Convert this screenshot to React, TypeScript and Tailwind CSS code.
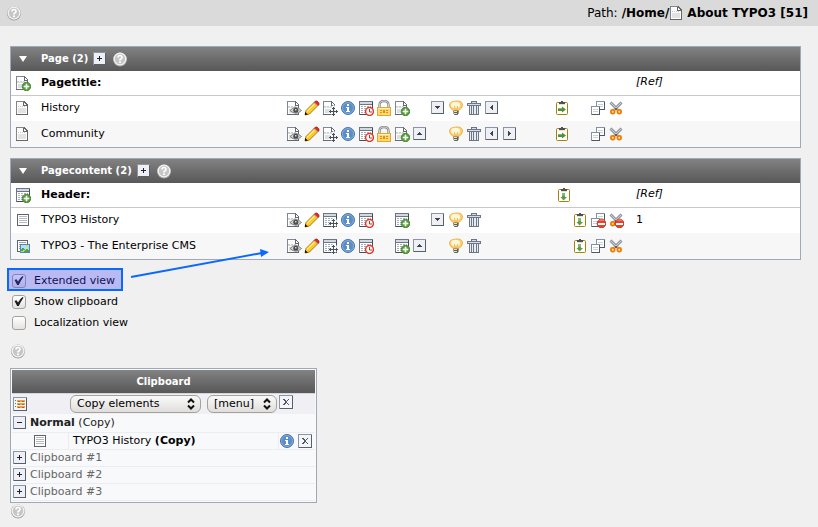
import { useState, type ReactNode } from "react";

type IconName =
  | "eye" | "pencil" | "movePage" | "moveContent" | "info" | "history" | "lock"
  | "newPage" | "newContent" | "up" | "down" | "left" | "right" | "bulb" | "trash"
  | "pasteInto" | "pasteAfter" | "copy" | "cut" | "copyOff" | "cutOff"
  | "page" | "content" | "image" | "plus" | "minus" | "close" | "list";

const PageSheet = () => (
  <g shapeRendering="crispEdges">
    <path d="M1 1h8v1h1v1h1v1h1v1h1v10H1z" fill="#fff" />
    <path d="M2 7h9v1H2zM3 9h8v4H3z" fill="#dedfe1" />
    <path d="M2 6h2v1H2zM5 6h2v1H5zM8 6h2v1H8z" fill="#c9cbd0" />
    <path d="M1 1h8v1H2v12H1z" fill="#7e8796" />
    <path d="M9 1h1v1h1v1h1v1h1v11H1v-1h11V6H9z M10 3v2h2V4h-1V3z" fill="#626a77" fillRule="evenodd" />
  </g>
);

const PlainPage = () => (
  <g shapeRendering="crispEdges">
    <path d="M1 1h8l4 4v10H1z" fill="#fbfbfb" />
    <path d="M3 8h8v5H3z" fill="#e2e2e2" />
    <path d="M3 6h1v1H3zM5 6h1v1H5zM7 6h1v1H7zM9 6h1v1H9z" fill="#c6c6c6" />
    <path d="M1 1h8v1H2v12H1z" fill="#858585" />
    <path d="M9 1h1v1h1v1h1v1h1v11H1v-1h11V6H8V2h1zM9 3v2h2V4h-1V3z" fill="#666" fillRule="evenodd" />
  </g>
);

const ContentSheet = () => (
  <g shapeRendering="crispEdges">
    <path d="M1 1h14v14H1z" fill="#fff" />
    <path d="M2 2h12v2H2z" fill="#d3d9e3" />
    <path d="M1 1h14v1H1zM1 2h1v13H1zM2 4h12v1H2z" fill="#6b7787" />
    <path d="M14 2h1v13H2v-1h12z" fill="#444c57" />
    <path d="M3 6h2v1H3zM6 6h2v1H6zM9 6h2v1H9zM12 6h1v1h-1zM3 8h2v1H3zM6 8h2v1H6zM9 8h2v1H9zM12 8h1v1h-1zM3 10h2v1H3zM6 10h2v1H6zM9 10h2v1H9zM3 12h2v1H3zM6 12h2v1H6z" fill="#a5adb8" />
  </g>
);

const GreenPlus = () => (
  <g>
    <circle cx="11.500" cy="11.500" r="4.200" fill="#5c9f40" stroke="#4a8a33" />
    <path d="M11 9h1v2h2v1h-2v2h-1v-2H9v-1h2z" fill="#fff" stroke="#fff" strokeWidth=".6" />
  </g>
);

const MoveCross = () => (
  <g>
    <path d="M11 5h1l3 3v1l1 2v1l-3 3-1 1h-1l-1-1-3-3v-1l3-3z" fill="#fff" opacity=".8" />
    <path d="M11 7h1v9h-1zM7 11h9v1H7zM10 8h3v1h-3zM10 14h3v1h-3zM8 10h1v3H8zM14 10h1v3h-1z" fill="#4a515d" shapeRendering="crispEdges" />
  </g>
);

const BlockSign = () => (
  <g>
    <circle cx="11.500" cy="11.500" r="4.300" fill="#e3442c" stroke="#c8301a" />
    <path d="M8 8.800q3.500-3 7 0z" fill="#f58c70" />
    <path d="M8 11h7v2H8z" fill="#fff" />
  </g>
);

const Clip = () => (
  <g>
    <rect x="2.500" y="2.500" width="11" height="12" rx="1" fill="#fff" stroke="#a87f08" />
    <path d="M7 1h2v1h2v2H5V2h2z" fill="#4c5058" />
    <path d="M5 4h6v1H5z" fill="#efe1bd" />
  </g>
);

const Copies = () => (
  <g shapeRendering="crispEdges">
    <path d="M6 1h9v9H6z" fill="#fff" />
    <path d="M6 1h9v1H7v8H6z" fill="#8490a3" />
    <path d="M14 2h1v8H7V9h7z" fill="#4f5968" />
    <path d="M8 4h5v1H8zM8 6h5v1H8z" fill="#ccd1d8" />
    <path d="M1 6h9v9H1z" fill="#fff" />
    <path d="M1 6h9v1H2v8H1z" fill="#8490a3" />
    <path d="M9 7h1v8H2v-1h7z" fill="#4f5968" />
    <path d="M3 9h5v1H3zM3 11h5v1H3z" fill="#ccd1d8" />
  </g>
);

const Scissors = () => (
  <g>
    <path d="M2.500 2.500L9.500 9.500M13.500 2.500L6.500 9.500" stroke="#6c7683" strokeWidth="2.800" />
    <path d="M2.500 2.500L9.500 9.500M13.500 2.500L6.500 9.500" stroke="#c6ccd5" strokeWidth="1.300" />
    <path d="M7 8h2v2H7z" fill="#8a5a30" />
    <rect x="2.900" y="9.900" width="3.700" height="3.700" rx="1.500" fill="#ffe3b8" stroke="#ef7a00" strokeWidth="1.800" />
    <rect x="9.400" y="9.900" width="3.700" height="3.700" rx="1.500" fill="#ffe3b8" stroke="#ef7a00" strokeWidth="1.800" />
  </g>
);

const Box = ({ children }: { children: ReactNode }) => (
  <g shapeRendering="crispEdges">
    <path d="M1 1h13v13H1z" fill="#eef0f5" />
    <path d="M1 1h13v1H2v12H1z" fill="#8b95a5" />
    <path d="M13 2h1v12H2v-1h11z" fill="#565f6d" />
    {children}
  </g>
);

const WideBox = ({ children }: { children: ReactNode }) => (
  <g shapeRendering="crispEdges">
    <path d="M1 1h14v14H1z" fill="#f4f5f9" />
    <path d="M1 1h14v1H2v13H1z" fill="#8b95a5" />
    <path d="M14 2h1v13H2v-1h12z" fill="#565f6d" />
    {children}
  </g>
);

const drawings: Record<IconName, ReactNode> = {
  page: <PlainPage />,
  eye: (
    <g>
      <PageSheet />
      <path d="M4 10.500q5.500-6 11.500 0q-5.500 5.500-11.500 0z" fill="#d4d4d4" stroke="#808080" strokeWidth="1" />
      <circle cx="9.800" cy="10.200" r="2.500" fill="#4c4c4c" />
      <path d="M9 9h1.500v1.500H9z" fill="#d8d8d8" />
    </g>
  ),
  pencil: (
    <g>
      <path d="M1 15l1-4.500L10.500 2l3.500 3.500L5.500 14z" fill="#ffcb1e" stroke="#9a5b06" strokeWidth=".8" />
      <path d="M3 11.500L10.500 4" stroke="#fff08a" strokeWidth="1.300" />
      <path d="M10 2.500l1.500-1.500h1.500l2 2v1.500L13.500 6z" fill="#e0301c" stroke="#9d1d0e" strokeWidth=".7" />
      <path d="M10 2.500L13.500 6" stroke="#ddd" strokeWidth="1" />
      <path d="M1 15v-3l3 2.500z" fill="#111" />
    </g>
  ),
  movePage: <g><PageSheet /><MoveCross /></g>,
  moveContent: <g><ContentSheet /><MoveCross /></g>,
  info: (
    <g>
      <circle cx="8" cy="8" r="6.500" fill="#5b8dc8" stroke="#4676ad" />
      <circle cx="8" cy="8" r="5.500" fill="none" stroke="#8db3df" strokeWidth=".8" />
      <path d="M7 4h2v2H7zM6 7h3v4h1v1H6v-1h1V8H6z" fill="#fff" />
    </g>
  ),
  history: (
    <g>
      <ContentSheet />
      <circle cx="11.500" cy="11.500" r="3.900" fill="#fff" stroke="#de3a28" strokeWidth="1.500" />
      <path d="M11.500 9v3H14" fill="none" stroke="#c03226" />
    </g>
  ),
  lock: (
    <g>
      <path d="M3.500 8V5q0-4 4.500-4t4.500 4v3" fill="none" stroke="#85888a" strokeWidth="2.400" />
      <path d="M3.500 8V5q0-4 4.500-4t4.500 4v3" fill="none" stroke="#d1d3d3" strokeWidth="1" />
      <rect x="1.500" y="7.500" width="13" height="8" fill="#ffd870" stroke="#e5a531" />
      <path d="M2 8h12v1H2z" fill="#fff0b5" />
      <path d="M4 10h2v1H4zM10 10h2v1h-2zM4 12h2v1H4zM10 12h2v1h-2zM7 10h2v3H7z" fill="#d79220" />
    </g>
  ),
  newPage: <g><PageSheet /><GreenPlus /></g>,
  newContent: <g><ContentSheet /><GreenPlus /></g>,
  up: <Box><path d="M7 6h1v1h1v1h1v1H5V8h1V7h1z" fill="#41454b" /></Box>,
  down: <Box><path d="M5 6h5v1H9v1H8v1H7V8H6V7H5z" fill="#41454b" /></Box>,
  left: <Box><path d="M8 5h1v5H8V9H7V8H6V7h1V6h1z" fill="#41454b" /></Box>,
  right: <Box><path d="M6 5h1v1h1v1h1v1H8v1H7v1H6z" fill="#41454b" /></Box>,
  plus: <Box><path d="M7 5h1v2h2v1H8v2H7V8H5V7h2z" fill="#20242a" /></Box>,
  minus: <Box><path d="M5 7h5v1H5z" fill="#20242a" /></Box>,
  close: (
    <WideBox>
      <path d="M5 5h2v1h1v1h1V6h1V5h1v1h-1v1H9v2h1v1h1v1h-1v-1H9V9H8v1H7v1H5v-1h1V9h1V7H6V6H5z" fill="#505763" />
    </WideBox>
  ),
  list: (
    <WideBox>
      <path d="M3 4h1v1H3zM3 7h1v1H3zM3 10h1v1H3z" fill="#4c8a32" />
      <path d="M5 4h8v2H5zM5 7h8v2H5zM5 10h8v2H5z" fill="#f0a24a" />
      <path d="M6 5h2v1H6zM10 5h2v1h-2zM6 8h2v1H6zM10 8h2v1h-2zM6 11h2v1H6zM10 11h2v1h-2z" fill="#b0651c" />
    </WideBox>
  ),
  bulb: (
    <g>
      <path d="M5.500 10.500Q1.500 8.500 1.500 5T8 1t6.500 4q0 3.500-4 5.500V12h-5z" fill="#fcd070" stroke="#e8a93a" strokeWidth=".8" />
      <ellipse cx="7.500" cy="5" rx="4.500" ry="3.200" fill="#fff6d4" />
      <path d="M6.500 6l.7 4M9.500 6L8.800 10" stroke="#e0a94e" strokeWidth=".8" />
      <path d="M5.500 10.500h5v3l-1 1.500h-3l-1-1.500z" fill="#5a5f68" />
      <path d="M6 11h3v1H6zM6 13h3v1H6z" fill="#f3dfa6" />
    </g>
  ),
  trash: (
    <g shapeRendering="crispEdges">
      <path d="M5 1h6v2h4v3H1V3h4z" fill="#6b7788" />
      <path d="M6 2h4v1H6zM2 4h12v1H2z" fill="#d8dde5" />
      <path d="M3 6h10v9H3z" fill="#6b7788" />
      <path d="M4 6h1v8H4zM6 6h1v8H6zM8 6h2v8H8zM11 6h1v8h-1z" fill="#e9ecf1" />
    </g>
  ),
  pasteInto: <g><Clip /><path d="M4 8h4V6.500l4 3-4 3V11H4z" fill="#4f8f3e" /><path d="M4 8h4v1H4z" fill="#83b673" /></g>,
  pasteAfter: <g><Clip /><path d="M6 6h3v4h2l-3.500 3.500L4.500 10H6z" fill="#5c9a4a" /><path d="M6 6h3v3H6z" fill="#85b577" /></g>,
  copy: <Copies />,
  cut: <Scissors />,
  copyOff: <g><Copies /><BlockSign /></g>,
  cutOff: <g><Scissors /><BlockSign /></g>,
  content: (
    <g shapeRendering="crispEdges">
      <path d="M2 2h12v12H2z" fill="#5d646f" />
      <path d="M3 3h10v10H3z" fill="#fff" />
      <path d="M4 4h8v1H4zM4 6h8v1H4zM4 8h8v1H4zM4 10h8v1H4z" fill="#b4bac0" />
    </g>
  ),
  image: (
    <g shapeRendering="crispEdges">
      <path d="M2 2h11v12H2z" fill="#5d646f" />
      <path d="M3 3h9v10H3z" fill="#fff" />
      <path d="M4 4h7v1H4zM4 6h1v1H4zM4 8h1v1H4zM4 10h1v1H4z" fill="#98a0ab" />
      <path d="M5 6h10v9H5z" fill="#4f86b9" />
      <path d="M6 7h8v7H6z" fill="#b5e0fb" />
      <path d="M6 11h1v-1h2v1h1v1h1v-1h2v1h1v2H6z" fill="#57a23c" />
      <path d="M6 13h3v1H6zM8 12h2v1H8z" fill="#bfe078" />
      <path d="M11 7h2v2h-2z" fill="#ffd432" />
    </g>
  ),
};

const Icon = ({ name }: { name: IconName }) => (
  <svg viewBox="0 0 16 16" className="block size-4 shrink-0" aria-hidden="true">
    {drawings[name]}
  </svg>
);

const IconButton = ({ name }: { name: IconName }) => (
  <button type="button" aria-label={name} className="block size-4 shrink-0 cursor-pointer">
    <Icon name={name} />
  </button>
);

const Help = () => (
  <button type="button" aria-label="Help" className="block size-4 shrink-0 cursor-pointer">
    <svg viewBox="0 0 16 16" className="block size-4" aria-hidden="true">
      <circle cx="8" cy="8.500" r="7" fill="#a5a5a5" />
      <circle cx="8" cy="8" r="6.500" fill="#f4f4f4" />
      <circle cx="8" cy="8" r="5.200" fill="#c6c6c6" />
      <path d="M6 6.500Q6 4.500 8 4.500t2 1.900Q10 7.500 8 8.500v1" fill="none" stroke="#fff" strokeWidth="1.600" />
      <path d="M7 10.500h2v1.500H7z" fill="#fff" />
    </svg>
  </button>
);

type Slot = IconName | null;

const Slots = ({ items }: { items: Slot[] }) => (
  <div className="flex gap-0.5">
    {items.map((item, i) =>
      item ? <IconButton key={i} name={item} /> : <span key={i} className="size-4 shrink-0" />,
    )}
  </div>
);

type RecordRow = { icon: IconName; title: string; controls: Slot[]; clip: Slot[]; ref?: string };

type RecordListProps = {
  caption: string;
  column: string;
  newIcon: IconName;
  headClip?: IconName;
  rows: RecordRow[];
};

const RecordList = ({ caption, column, newIcon, headClip, rows }: RecordListProps) => {
  const [open, setOpen] = useState(true);
  return (
    <section className="border border-[#9fa8b7] bg-white">
      <h2 className="flex h-6 items-center bg-linear-to-b from-[#828282] to-[#585858] text-[10px] font-bold text-white">
        <button
          type="button"
          aria-label="Toggle list"
          onClick={() => setOpen(!open)}
          className="flex w-[30px] cursor-pointer pl-2"
        >
          <svg viewBox="0 0 8 6" className="h-1.5 w-2" aria-hidden="true">
            <path d="M0 0h8L4 6z" fill="#fff" />
          </svg>
        </button>
        <span className="mr-1">{caption}</span>
        <IconButton name="plus" />
        <span className="ml-1"><Help /></span>
      </h2>
      {open && (
        <table className="w-full table-fixed border-collapse">
          <colgroup>
            <col className="w-[30px]" />
            <col className="w-[245px]" />
            <col className="w-[268px]" />
            <col className="w-[82px]" />
            <col />
          </colgroup>
          <thead>
            <tr className="h-6 border-b border-[#c8c8c8] text-left">
              <td className="pl-1"><IconButton name={newIcon} /></td>
              <th className="font-bold">{column}</th>
              <td />
              <td className="pl-0.5">{headClip && <IconButton name={headClip} />}</td>
              <th className="pb-0.5 font-normal italic">[Ref]</th>
            </tr>
          </thead>
          <tbody>
            {rows.map((row) => (
              <tr key={row.title} className="h-[26px] even:bg-[#f7f7f7]">
                <td className="pl-1"><IconButton name={row.icon} /></td>
                <td>{row.title}</td>
                <td><Slots items={row.controls} /></td>
                <td><Slots items={row.clip} /></td>
                <td>{row.ref}</td>
              </tr>
            ))}
          </tbody>
        </table>
      )}
    </section>
  );
};

const pageRows: RecordRow[] = [
  {
    icon: "page",
    title: "History",
    controls: ["eye", "pencil", "movePage", "info", "history", "lock", "newPage", null, "down", "bulb", "trash", "left"],
    clip: ["pasteInto", null, "copy", "cut"],
  },
  {
    icon: "page",
    title: "Community",
    controls: ["eye", "pencil", "movePage", "info", "history", "lock", "newPage", "up", null, "bulb", "trash", "left", "right"],
    clip: ["pasteInto", null, "copy", "cut"],
  },
];

const contentRows: RecordRow[] = [
  {
    icon: "content",
    title: "TYPO3 History",
    controls: ["eye", "pencil", "moveContent", "info", "history", null, "newContent", null, "down", "bulb", "trash"],
    clip: [null, "pasteAfter", "copyOff", "cutOff"],
    ref: "1",
  },
  {
    icon: "image",
    title: "TYPO3 - The Enterprise CMS",
    controls: ["eye", "pencil", "moveContent", "info", "history", null, "newContent", "up", null, "bulb", "trash"],
    clip: [null, "pasteAfter", "copy", "cut"],
  },
];

const ViewOption = ({ label, checked, marked }: { label: string; checked?: boolean; marked?: boolean }) => (
  <div className="relative flex h-[21px] w-fit items-center pr-1 pl-1">
    <label className="flex items-center gap-2">
      <span className="grid">
        <input
          type="checkbox"
          defaultChecked={checked}
          className="peer col-start-1 row-start-1 size-3.5 appearance-none rounded-[3px] border border-[#a5a29d] bg-linear-to-b from-white to-[#e3e2e0]"
        />
        <svg
          viewBox="0 0 14 14"
          className="pointer-events-none invisible col-start-1 row-start-1 size-3.5 peer-checked:visible"
          aria-hidden="true"
        >
          <path d="M2.500 6l2-.8L6 7.400Q8 4 10.500 2l1 .8Q8.800 6.500 6.800 11H5.200z" fill="#1c1c1c" />
        </svg>
      </span>
      {label}
    </label>
    {marked && (
      <span className="pointer-events-none absolute -top-0.5 -right-1 bottom-0 -left-px border-2 border-[#0a68ff] bg-[#3c3cff]/30" />
    )}
  </div>
);

const Dropdown = ({ label, options, width }: { label: string; options: string[]; width: string }) => (
  <span className={`grid ${width}`}>
    <select
      aria-label={label}
      className="col-start-1 row-start-1 h-[18px] w-full appearance-none rounded-md border border-[#a5a29d] bg-linear-to-b from-[#fafafa] to-[#dfdedb] pl-1.5 text-[11px] text-black"
    >
      {options.map((option) => (
        <option key={option}>{option}</option>
      ))}
    </select>
    <svg
      viewBox="0 0 8 12"
      className="pointer-events-none col-start-1 row-start-1 mr-1.5 h-3 w-2 self-center justify-self-end"
      aria-hidden="true"
    >
      <path d="M1 4.500L4 1.500l3 3M1 7.500l3 3 3-3" fill="none" stroke="#111" strokeWidth="2" />
    </svg>
  </span>
);

const Clipboard = () => (
  <table className="w-[307px] table-fixed border-separate border-spacing-0 border border-[#9fa8b7] bg-[#f8f9fb] p-px">
    <colgroup>
      <col className="w-[18px]" />
      <col className="w-[38px]" />
      <col />
      <col className="w-[37px]" />
    </colgroup>
    <thead>
      <tr className="h-[23px]">
        <th colSpan={4} className="bg-linear-to-b from-[#828282] to-[#585858] text-[10px] font-bold text-white">
          Clipboard
        </th>
      </tr>
    </thead>
    <tbody>
      <tr className="h-[21px] bg-[#f0eff4]">
        <td colSpan={2} className="border-t border-[#d4d4da]"><IconButton name="list" /></td>
        <td className="border-t border-[#d4d4da]">
          <div className="flex gap-1.5 pl-0.5">
            <Dropdown label="Clipboard mode" options={["Copy elements", "Move elements"]} width="w-[131px]" />
            <Dropdown label="Clipboard menu" options={["[menu]"]} width="w-[70px]" />
          </div>
        </td>
        <td className="border-t border-[#d4d4da] align-top"><IconButton name="close" /></td>
      </tr>
      <tr className="h-[18px]">
        <td><IconButton name="minus" /></td>
        <td colSpan={3} className="text-[#222]"><b>Normal</b> (Copy)</td>
      </tr>
      <tr className="h-[17px]">
        <td colSpan={2} className="border-y border-[#ededf0] pl-5"><Icon name="content" /></td>
        <td className="border-y border-l border-[#ededf0] pl-1">TYPO3 History <b>(Copy)</b></td>
        <td className="border-y border-l border-[#ededf0]"><Slots items={["info", "close"]} /></td>
      </tr>
      {["Clipboard #1", "Clipboard #2", "Clipboard #3"].map((name) => (
        <tr key={name} className="h-[17px]">
          <td className="border-b border-[#ededf0]"><IconButton name="plus" /></td>
          <td colSpan={3} className="border-b border-[#ededf0] text-[#666]">{name}</td>
        </tr>
      ))}
    </tbody>
  </table>
);

export default function App() {
  return (
    <div className="min-h-screen bg-[#f0f0f0] font-['DejaVu_Sans',Verdana,sans-serif] text-[11px] leading-4 text-black">
      <header className="flex h-[26px] items-center justify-between bg-[#dadada] pr-2.5 pl-1.5">
        <Help />
        <div className="flex items-center text-[12px]">
          <span className="mr-1">Path:</span>
          <b>/Home/</b>
          <Icon name="page" />
          <b className="ml-0.5">About TYPO3 [51]</b>
        </div>
      </header>
      <main className="pt-5 pr-[17px] pl-2.5">
        <div className="flex flex-col gap-2.5">
          <RecordList caption="Page (2)" column="Pagetitle:" newIcon="newPage" rows={pageRows} />
          <RecordList
            caption="Pagecontent (2)"
            column="Header:"
            newIcon="newContent"
            headClip="pasteAfter"
            rows={contentRows}
          />
        </div>
        <div className="relative -ml-0.5 pt-2.5">
          <ViewOption label="Extended view" checked marked />
          <ViewOption label="Show clipboard" checked />
          <ViewOption label="Localization view" />
          <svg
            viewBox="0 0 140 30"
            className="pointer-events-none absolute -top-3 left-[122px] h-[30px] w-[140px]"
            aria-hidden="true"
          >
            <path d="M1 29L132 5" stroke="#0a68ff" strokeWidth="2" />
            <path d="M130 1l9 3-8 5z" fill="#0a68ff" />
          </svg>
        </div>
        <div className="pt-2.5 pb-[9px]"><Help /></div>
        <Clipboard />
        <Help />
      </main>
    </div>
  );
}
